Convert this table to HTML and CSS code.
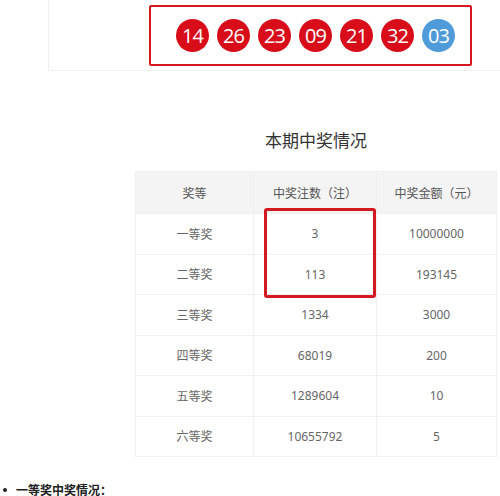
FILE: index.html
```html
<!DOCTYPE html>
<html lang="zh-CN">
<head>
    <meta charset="UTF-8">
    <meta name="viewport" content="width=device-width, initial-scale=1.0">
    <title>本期中奖情况</title>
    <link rel="stylesheet" href="styles.css">
</head>
<body>
    <div class="draw-panel">
        <div class="ball-box">
            <span class="ball red">14</span>
            <span class="ball red">26</span>
            <span class="ball red">23</span>
            <span class="ball red">09</span>
            <span class="ball red">21</span>
            <span class="ball red">32</span>
            <span class="ball blue">03</span>
        </div>
    </div>

    <div class="result">
        <h2 class="result-title">本期中奖情况</h2>
        <div class="table-wrap">
            <table class="prize-table">
                <thead>
                    <tr>
                        <th class="col-level">奖等</th>
                        <th class="col-count">中奖注数（注）</th>
                        <th class="col-money">中奖金额（元）</th>
                    </tr>
                </thead>
                <tbody>
                    <tr><td>一等奖</td><td>3</td><td>10000000</td></tr>
                    <tr><td>二等奖</td><td>113</td><td>193145</td></tr>
                    <tr><td>三等奖</td><td>1334</td><td>3000</td></tr>
                    <tr><td>四等奖</td><td>68019</td><td>200</td></tr>
                    <tr><td>五等奖</td><td>1289604</td><td>10</td></tr>
                    <tr><td>六等奖</td><td>10655792</td><td>5</td></tr>
                </tbody>
            </table>
            <div class="highlight"></div>
        </div>
    </div>

    <ul class="notes">
        <li>一等奖中奖情况：</li>
    </ul>
</body>
</html>
```

FILE: styles.css
```css
* {
    margin: 0;
    padding: 0;
    box-sizing: border-box;
}

body {
    background: #fff;
    font-family: "Noto Sans", "Noto Sans CJK SC", sans-serif;
    color: #666;
}

.draw-panel {
    margin-left: 48px;
    height: 71px;
    border-left: 1px solid #f0f0f0;
    border-bottom: 1px solid #f0f0f0;
    padding: 5px 0 0 100px;
}

.ball-box {
    width: 323px;
    height: 61px;
    border: 2px solid #d8161f;
    border-radius: 2px;
    display: flex;
    align-items: center;
    gap: 8px;
    padding-left: 25px;
}

.ball {
    width: 33px;
    height: 33px;
    border-radius: 50%;
    color: #fff;
    font-family: "Open Sans", sans-serif;
    font-size: 20px;
    letter-spacing: -1px;
    display: flex;
    align-items: center;
    justify-content: center;
}

.red {
    background: #d90c1a;
}

.blue {
    background: #4f9bd9;
}

.result {
    margin: 56px 0 0 135px;
    width: 362px;
}

.result-title {
    text-align: center;
    font-size: 17px;
    font-weight: 400;
    color: #333;
    height: 44px;
    line-height: 28px;
}

.table-wrap {
    position: relative;
}

.prize-table {
    width: 100%;
    border-collapse: collapse;
    font-size: 12px;
    color: #666;
    text-align: center;
}

.prize-table th,
.prize-table td {
    border: 1px solid #f0f0f0;
    font-weight: 400;
}

.prize-table th {
    background: #f4f4f4;
    height: 42px;
    color: #555;
}

.prize-table td {
    height: 40.5px;
}

.col-level {
    width: 118px;
}

.col-count {
    width: 123px;
}

.highlight {
    position: absolute;
    left: 129px;
    top: 37px;
    width: 112px;
    height: 90px;
    border: 3px solid #d2191f;
    border-radius: 3px;
}

.notes {
    list-style: none;
    margin: 24px 0 0 3px;
    font-size: 12px;
    font-weight: 700;
    color: #222;
}

.notes li {
    display: flex;
    align-items: center;
    gap: 9px;
}

.notes li::before {
    content: "";
    width: 4px;
    height: 4px;
    border-radius: 50%;
    background: #222;
}
```
